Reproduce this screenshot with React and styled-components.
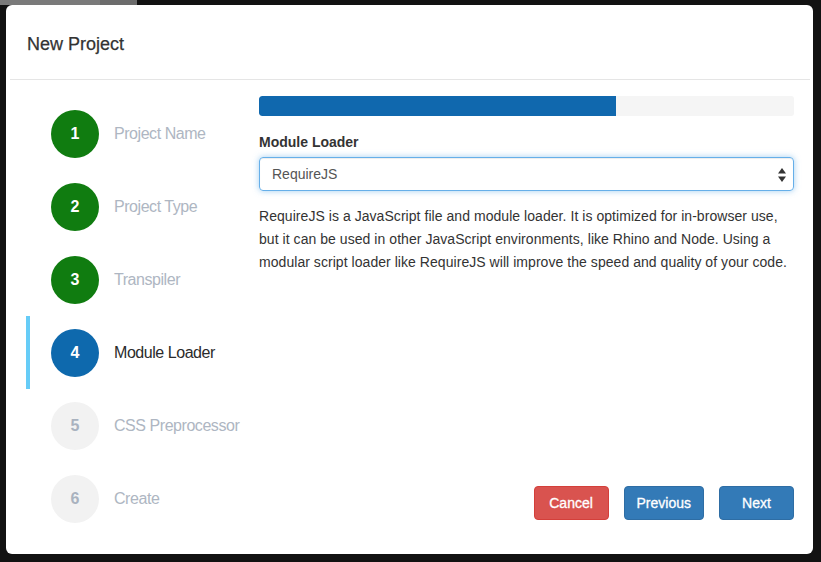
import React from "react";
import styled, { createGlobalStyle } from "styled-components";

const Global = createGlobalStyle`
  html, body { margin: 0; padding: 0; }
  body {
    background-color: #121212;
    background-image: linear-gradient(to right, #7a7a7a 0, #7a7a7a 100px, #6c6c6c 100px, #6c6c6c 137px, #121212 137px);
    background-size: 100% 5px;
    background-repeat: no-repeat;
    font-family: "Liberation Sans", Arial, sans-serif;
    color: #333;
  }
`;

const Page = styled.div`
  width: 821px;
  height: 562px;
  box-sizing: border-box;
  padding: 5px 8px 8px 6px;
`;

const Modal = styled.div`
  width: 807px;
  height: 549px;
  background: #fff;
  border-radius: 6px;
  display: flex;
  flex-direction: column;
  overflow: hidden;
`;

const Header = styled.div`
  height: 75px;
  margin: 0 3px 0 4px;
  border-bottom: 1px solid #e5e5e5;
  display: flex;
  align-items: center;
  padding: 0 17px;
  box-sizing: border-box;
  flex: none;
`;

const Title = styled.h4`
  margin: 0;
  font-size: 18px;
  font-weight: 500;
  color: #333;
  position: relative;
  top: 2px;
  -webkit-text-stroke: 0.25px #333;
`;

const Body = styled.div`
  flex: 1;
  display: flex;
`;

const Sidebar = styled.ul`
  list-style: none;
  margin: 0;
  padding: 17px 0 0 20px;
  width: 233px;
  flex: none;
`;

const Step = styled.li`
  height: 73px;
  display: flex;
  align-items: center;
  box-sizing: border-box;
  border-left: 4px solid ${(p) => (p.$active ? "#66ccf7" : "transparent")};
  padding-left: 21px;
`;

const circleColors = {
  done: ["#107c10", "#fff"],
  active: ["#0e69ad", "#fff"],
  todo: ["#f2f2f2", "#a9b2bf"],
};

const Circle = styled.span`
  width: 48px;
  height: 48px;
  border-radius: 50%;
  flex: none;
  display: flex;
  align-items: center;
  justify-content: center;
  font-size: 16px;
  font-weight: 700;
  background: ${(p) => circleColors[p.$state][0]};
  color: ${(p) => circleColors[p.$state][1]};
`;

const StepLabel = styled.span`
  margin-left: 15px;
  font-size: 16px;
  letter-spacing: -0.45px;
  color: ${(p) => (p.$state === "active" ? "#2b2b2b" : "#aeb6c2")};
`;

const Content = styled.div`
  flex: 1;
  display: flex;
  flex-direction: column;
  padding: 16px 19px 34px 0;
  min-width: 0;
`;

const Progress = styled.div`
  height: 20px;
  background: #f5f5f5;
  border-radius: 3px;
  overflow: hidden;
`;

const ProgressFill = styled.div`
  height: 100%;
  background: #1068ae;
  border-radius: 3px 0 0 3px;
`;

const Label = styled.label`
  display: block;
  margin-top: 16px;
  font-size: 14px;
  font-weight: 700;
  line-height: 20px;
  color: #333;
`;

const SelectBox = styled.div`
  position: relative;
  margin-top: 5px;
  height: 34px;
  box-sizing: border-box;
  border: 1px solid #66afe9;
  border-radius: 4px;
  box-shadow: inset 0 1px 1px rgba(0, 0, 0, 0.075), 0 0 6px rgba(102, 175, 233, 0.6);
  display: flex;
  align-items: center;
  padding: 0 12px;
  font-size: 14px;
  color: #555;
`;

const Arrows = styled.svg`
  position: absolute;
  right: 7px;
  top: 10px;
`;

const Description = styled.p`
  margin: 14px 0 0;
  font-size: 14px;
  line-height: 23px;
  letter-spacing: 0.05px;
  color: #333;
`;

const Footer = styled.div`
  margin-top: auto;
  display: flex;
  justify-content: flex-end;
  gap: 15px;
`;

const Button = styled.button`
  height: 34px;
  min-width: 75px;
  padding: 0 12px;
  border-radius: 4px;
  border: 1px solid ${(p) => (p.$variant === "danger" ? "#d43f3a" : "#2e6da4")};
  background: ${(p) => (p.$variant === "danger" ? "#d9534f" : "#337ab7")};
  color: #fff;
  font-family: "Liberation Sans", Arial, sans-serif;
  font-size: 14px;
  -webkit-text-stroke: 0.3px #fff;
  cursor: pointer;
`;

const steps = [
  { n: 1, label: "Project Name", state: "done" },
  { n: 2, label: "Project Type", state: "done" },
  { n: 3, label: "Transpiler", state: "done" },
  { n: 4, label: "Module Loader", state: "active" },
  { n: 5, label: "CSS Preprocessor", state: "todo" },
  { n: 6, label: "Create", state: "todo" },
];

export default function App() {
  const progress = (4 / 6) * 100;
  return (
    <Page>
      <Global />
      <Modal>
        <Header>
          <Title>New Project</Title>
        </Header>
        <Body>
          <Sidebar>
            {steps.map((s) => (
              <Step key={s.n} $active={s.state === "active"}>
                <Circle $state={s.state}>{s.n}</Circle>
                <StepLabel $state={s.state}>{s.label}</StepLabel>
              </Step>
            ))}
          </Sidebar>
          <Content>
            <Progress>
              <ProgressFill style={{ width: `${progress}%` }} />
            </Progress>
            <Label>Module Loader</Label>
            <SelectBox>
              RequireJS
              <Arrows width="8" height="14" viewBox="0 0 8 14">
                <path d="M4 0 L8 5.5 H0 Z" fill="#333" />
                <path d="M4 14 L8 8.5 H0 Z" fill="#333" />
              </Arrows>
            </SelectBox>
            <Description>
              RequireJS is a JavaScript file and module loader. It is optimized for in-browser use,
              but it can be used in other JavaScript environments, like Rhino and Node. Using a
              modular script loader like RequireJS will improve the speed and quality of your code.
            </Description>
            <Footer>
              <Button $variant="danger">Cancel</Button>
              <Button>Previous</Button>
              <Button>Next</Button>
            </Footer>
          </Content>
        </Body>
      </Modal>
    </Page>
  );
}
